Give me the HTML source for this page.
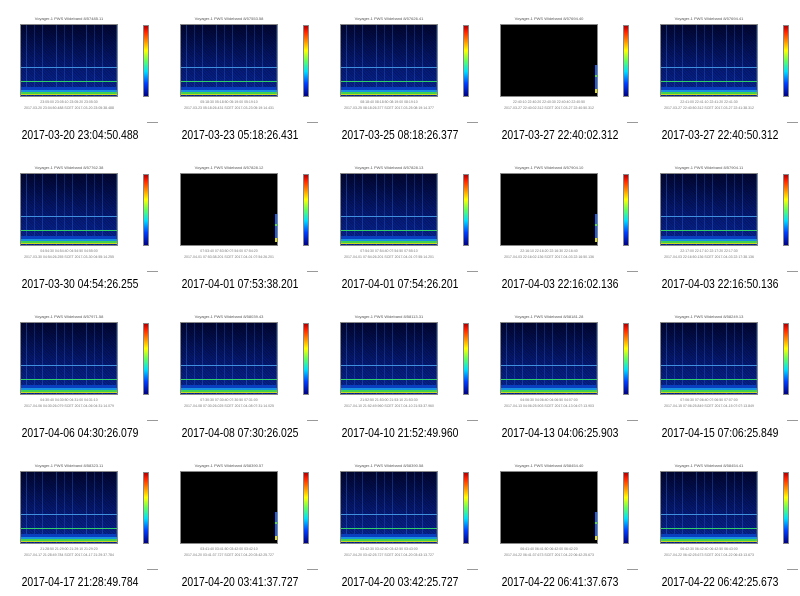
<!DOCTYPE html>
<html><head><meta charset="utf-8"><style>
body{margin:0;width:800px;height:596px;background:#fff;position:relative;overflow:hidden;font-family:"Liberation Sans",sans-serif}
.c{position:absolute;width:160px;height:149px}
.t{position:absolute;left:20px;width:98px;top:16px;font-size:4px;color:#555;text-align:center;white-space:nowrap}
.p{position:absolute;left:20px;top:24px;width:98px;height:73px;border:1px solid #888;box-sizing:border-box;
background:
linear-gradient(to top,transparent 1px,#c8d820 1px 2px,#40d050 2px 4px,#1890e0 4px 6px,#0a40c0 6px 9px,transparent 9px),
linear-gradient(to top,transparent 14px,#30d068 14px 15px,transparent 15px),
linear-gradient(to top,transparent 28px,#4090e0 28px 29px,transparent 29px),
repeating-linear-gradient(90deg,transparent 0 5px,rgba(60,130,240,.35) 5px 6px,transparent 6px 13px,rgba(50,110,230,.25) 13px 14px,transparent 14px 21px,rgba(50,120,240,.3) 21px 22px,transparent 22px 30px),
repeating-linear-gradient(45deg,rgba(0,0,0,.25) 0 1px,transparent 1px 2px),
linear-gradient(to bottom,#010633,#051a78 55%,#0828a0)}
.p.k{background:linear-gradient(to bottom,transparent 40px,#2060e0 40px 50px,#40e060 50px 52px,#2060e0 52px 64px,#e0e020 64px 68px,transparent 68px) right/2px 100% no-repeat,#000}
.cb{position:absolute;left:143px;top:25px;width:6px;height:72px;border:1px solid #888;box-sizing:border-box;background:linear-gradient(to bottom,#b00000,#ff2000 8%,#ff9000 22%,#ffff00 35%,#60ff60 50%,#00e0ff 65%,#0040ff 82%,#000080)}
.xl{position:absolute;left:20px;top:99px;width:98px;font-size:3.5px;color:#777;text-align:center;white-space:nowrap;line-height:6px}
.ln{position:absolute;left:147px;top:122px;width:11px;height:1px;background:#999}
.cap{position:absolute;left:0;width:160px;top:127px;font-size:13px;color:#000;text-align:center;white-space:nowrap;transform:scaleX(.8);line-height:16px}
</style></head><body>

<div class="c" style="left:0;top:0"><div class="t">Voyager-1 PWS Wideband 8/57485.11</div><div class="p"></div><div class="cb"></div><div class="xl">23:05:00 23:05:10 23:05:20 23:05:30<br>2017-03-20 23:04:50.488 SCET 2017-03-20 23:05:38.488</div><div class="ln"></div><div class="cap">2017-03-20 23:04:50.488</div></div>
<div class="c" style="left:160px;top:0"><div class="t">Voyager-1 PWS Wideband 8/57553.58</div><div class="p"></div><div class="cb"></div><div class="xl">05:18:30 05:18:50 05:19:00 05:19:10<br>2017-03-23 05:18:26.431 SCET 2017-03-23 05:19:14.431</div><div class="ln"></div><div class="cap">2017-03-23 05:18:26.431</div></div>
<div class="c" style="left:320px;top:0"><div class="t">Voyager-1 PWS Wideband 8/57626.41</div><div class="p"></div><div class="cb"></div><div class="xl">08:18:40 08:18:50 08:19:00 08:19:10<br>2017-03-25 08:18:26.377 SCET 2017-03-25 08:19:14.377</div><div class="ln"></div><div class="cap">2017-03-25 08:18:26.377</div></div>
<div class="c" style="left:480px;top:0"><div class="t">Voyager-1 PWS Wideband 8/57694.40</div><div class="p k"></div><div class="cb"></div><div class="xl">22:40:10 22:40:20 22:40:30 22:40:40 22:40:50<br>2017-03-27 22:40:02.312 SCET 2017-03-27 22:40:50.312</div><div class="ln"></div><div class="cap">2017-03-27 22:40:02.312</div></div>
<div class="c" style="left:640px;top:0"><div class="t">Voyager-1 PWS Wideband 8/57694.41</div><div class="p"></div><div class="cb"></div><div class="xl">22:41:00 22:41:10 22:41:20 22:41:30<br>2017-03-27 22:40:50.312 SCET 2017-03-27 22:41:38.312</div><div class="ln"></div><div class="cap">2017-03-27 22:40:50.312</div></div>

<div class="c" style="left:0;top:149px"><div class="t">Voyager-1 PWS Wideband 8/57762.38</div><div class="p"></div><div class="cb"></div><div class="xl">04:54:30 04:54:40 04:54:50 04:55:00<br>2017-03-30 04:54:26.255 SCET 2017-03-30 04:55:14.255</div><div class="ln"></div><div class="cap">2017-03-30 04:54:26.255</div></div>
<div class="c" style="left:160px;top:149px"><div class="t">Voyager-1 PWS Wideband 8/57828.12</div><div class="p k"></div><div class="cb"></div><div class="xl">07:53:40 07:53:50 07:54:00 07:54:20<br>2017-04-01 07:53:38.201 SCET 2017-04-01 07:54:26.201</div><div class="ln"></div><div class="cap">2017-04-01 07:53:38.201</div></div>
<div class="c" style="left:320px;top:149px"><div class="t">Voyager-1 PWS Wideband 8/57828.13</div><div class="p"></div><div class="cb"></div><div class="xl">07:54:30 07:54:40 07:54:50 07:55:10<br>2017-04-01 07:54:26.201 SCET 2017-04-01 07:55:14.201</div><div class="ln"></div><div class="cap">2017-04-01 07:54:26.201</div></div>
<div class="c" style="left:480px;top:149px"><div class="t">Voyager-1 PWS Wideband 8/57904.10</div><div class="p k"></div><div class="cb"></div><div class="xl">22:16:10 22:16:20 22:16:30 22:16:40<br>2017-04-03 22:16:02.136 SCET 2017-04-03 22:16:50.136</div><div class="ln"></div><div class="cap">2017-04-03 22:16:02.136</div></div>
<div class="c" style="left:640px;top:149px"><div class="t">Voyager-1 PWS Wideband 8/57904.11</div><div class="p"></div><div class="cb"></div><div class="xl">22:17:00 22:17:10 22:17:20 22:17:30<br>2017-04-03 22:16:50.136 SCET 2017-04-03 22:17:38.136</div><div class="ln"></div><div class="cap">2017-04-03 22:16:50.136</div></div>

<div class="c" style="left:0;top:298px"><div class="t">Voyager-1 PWS Wideband 8/57971.58</div><div class="p"></div><div class="cb"></div><div class="xl">04:30:40 04:30:50 04:31:00 04:31:10<br>2017-04-06 04:30:26.079 SCET 2017-04-06 04:31:14.079</div><div class="ln"></div><div class="cap">2017-04-06 04:30:26.079</div></div>
<div class="c" style="left:160px;top:298px"><div class="t">Voyager-1 PWS Wideband 8/58039.43</div><div class="p"></div><div class="cb"></div><div class="xl">07:30:30 07:30:40 07:30:50 07:31:00<br>2017-04-08 07:30:26.025 SCET 2017-04-08 07:31:14.025</div><div class="ln"></div><div class="cap">2017-04-08 07:30:26.025</div></div>
<div class="c" style="left:320px;top:298px"><div class="t">Voyager-1 PWS Wideband 8/58113.31</div><div class="p"></div><div class="cb"></div><div class="xl">21:52:50 21:53:00 21:53:10 21:53:30<br>2017-04-10 21:52:49.960 SCET 2017-04-10 21:53:37.960</div><div class="ln"></div><div class="cap">2017-04-10 21:52:49.960</div></div>
<div class="c" style="left:480px;top:298px"><div class="t">Voyager-1 PWS Wideband 8/58181.28</div><div class="p"></div><div class="cb"></div><div class="xl">04:06:30 04:06:40 04:06:50 04:07:00<br>2017-04-13 04:06:25.903 SCET 2017-04-13 04:07:13.903</div><div class="ln"></div><div class="cap">2017-04-13 04:06:25.903</div></div>
<div class="c" style="left:640px;top:298px"><div class="t">Voyager-1 PWS Wideband 8/58249.13</div><div class="p"></div><div class="cb"></div><div class="xl">07:06:30 07:06:40 07:06:50 07:07:00<br>2017-04-15 07:06:25.849 SCET 2017-04-15 07:07:13.849</div><div class="ln"></div><div class="cap">2017-04-15 07:06:25.849</div></div>

<div class="c" style="left:0;top:447px"><div class="t">Voyager-1 PWS Wideband 8/58323.11</div><div class="p"></div><div class="cb"></div><div class="xl">21:28:50 21:29:00 21:29:10 21:29:20<br>2017-04-17 21:28:49.784 SCET 2017-04-17 21:29:37.784</div><div class="ln"></div><div class="cap">2017-04-17 21:28:49.784</div></div>
<div class="c" style="left:160px;top:447px"><div class="t">Voyager-1 PWS Wideband 8/58390.57</div><div class="p k"></div><div class="cb"></div><div class="xl">03:41:40 03:41:50 03:42:00 03:42:10<br>2017-04-20 03:41:37.727 SCET 2017-04-20 03:42:25.727</div><div class="ln"></div><div class="cap">2017-04-20 03:41:37.727</div></div>
<div class="c" style="left:320px;top:447px"><div class="t">Voyager-1 PWS Wideband 8/58390.58</div><div class="p"></div><div class="cb"></div><div class="xl">03:42:30 03:42:40 03:42:50 03:43:00<br>2017-04-20 03:42:25.727 SCET 2017-04-20 03:43:13.727</div><div class="ln"></div><div class="cap">2017-04-20 03:42:25.727</div></div>
<div class="c" style="left:480px;top:447px"><div class="t">Voyager-1 PWS Wideband 8/58454.40</div><div class="p k"></div><div class="cb"></div><div class="xl">06:41:40 06:41:50 06:42:00 06:42:20<br>2017-04-22 06:41:37.673 SCET 2017-04-22 06:42:25.673</div><div class="ln"></div><div class="cap">2017-04-22 06:41:37.673</div></div>
<div class="c" style="left:640px;top:447px"><div class="t">Voyager-1 PWS Wideband 8/58454.41</div><div class="p"></div><div class="cb"></div><div class="xl">06:42:30 06:42:40 06:42:50 06:43:00<br>2017-04-22 06:42:25.673 SCET 2017-04-22 06:43:13.673</div><div class="ln"></div><div class="cap">2017-04-22 06:42:25.673</div></div>

</body></html>
